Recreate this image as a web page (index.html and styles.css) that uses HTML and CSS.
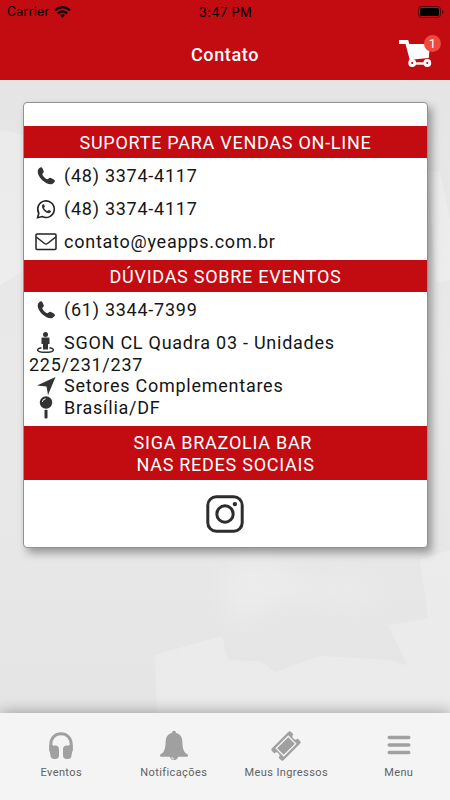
FILE: index.html
```html
<!DOCTYPE html>
<html lang="pt-br">
<head>
  <meta charset="UTF-8">
  <title>Contato</title>
  <link rel="stylesheet" href="styles.css">
</head>
<body>

<!-- icones usados mais de uma vez -->
<svg class="defs">
  <symbol id="phone" viewBox="0 0 22 22">
    <path d="M3 5C3.400 3.500 5 2 6.500 2.200C7.500 2.700 8.400 5.400 8.800 6.600C9.100 7.900 7.200 8.500 7.300 9.500C7.700 11 10.500 13.900 12.300 14.300C13.300 14.500 14 12.600 15.200 12.800C16.600 13.100 19.500 14.800 19.900 15.700C20 17.100 17.700 19.200 15.800 19.300C10.900 19.400 2.700 12.500 2.700 6.500Z"/>
  </symbol>
</svg>

<header class="header">
  <div class="status">
    <div class="carrier">
      <span>Carrier</span>
      <svg width="17" height="12" viewBox="0 0 17 12" fill="none" stroke="#000" stroke-width="2.200">
        <path d="M1 4.300Q8.500-1.900 16 4.300"/>
        <path d="M3.900 7.300Q8.500 3.600 13.100 7.300"/>
        <path d="M8.500 11.700L5.900 9.200Q8.500 7.200 11.100 9.200Z" fill="#000" stroke="none"/>
      </svg>
    </div>
    <div class="time">3:47 PM</div>
    <div class="battery">
      <svg width="26" height="12" viewBox="0 0 26 12">
        <rect x=".5" y=".5" width="22" height="11" rx="2.800" fill="none" stroke="#5d0508"/>
        <rect x="2" y="2" width="19" height="8" rx="1.500"/>
        <path d="M24 4Q25.500 4.500 25.500 6T24 8Z" fill="#5d0508"/>
      </svg>
    </div>
  </div>
  <div class="toolbar">
    <h1>Contato</h1>
    <div class="cart">
      <svg width="33" height="29" viewBox="0 0 33 29">
        <path d="M0 1H9.200L10.300 5H31L29.800 19L11.500 20.700L10.400 19.500L6.500 5H0Z" fill="#fff"/>
        <path d="M13 24.500H29" stroke="#fff" stroke-width="2.400" fill="none"/>
        <path d="M12 19L11 22" stroke="#fff" stroke-width="2" fill="none"/>
        <circle cx="13.200" cy="24" r="2.500" fill="#c30b12" stroke="#fff" stroke-width="2.800"/>
        <circle cx="28.300" cy="24" r="2.500" fill="#c30b12" stroke="#fff" stroke-width="2.800"/>
      </svg>
      <span class="badge">1</span>
    </div>
  </div>
</header>

<main class="content">
  <!-- textura clara do fundo -->
  <svg class="texture" viewBox="0 0 450 633">
    <path d="M0 50L25 55V190L0 205Z"/>
    <path d="M155 575L222 556L228 580L260 581L275 592L320 576L390 580L450 600V633H157Z"/>
    <path d="M388 545L450 535V633H430Z"/>
    <path d="M420 480L450 470V540L429 542Z"/>
    <path d="M428 90L440 92L450 140V200L436 203Z"/>
    <path d="M225 490Q250 470 285 490T370 500Q395 530 330 520T250 545Q215 530 225 490Z" class="soft"/>
    <path d="M160 55L200 68L201 66Z"/>
  </svg>
  <div class="card">
    <h2>SUPORTE PARA VENDAS ON-LINE</h2>
    <div class="section">
      <p class="row"><svg class="icon"><use href="#phone"/></svg>(48) 3374-4117</p>
      <p class="row">
        <svg class="icon" viewBox="0 0 22 22">
          <path d="M3.800 15.300A8.300 8.300 0 1 1 7.100 18.500L2.600 19.700Z" fill="none" stroke="#222" stroke-width="1.600"/>
          <path d="M6.900 7.600C7.200 6.700 8.200 5.900 8.900 6.200C9.300 6.700 9.800 8 9.900 8.500C9.900 9.100 9 9.500 9.100 9.900C9.500 11.100 11 12.500 12.300 12.900C12.900 13.100 13.300 11.800 13.900 11.900C14.600 12.100 15.900 12.700 16 13.100C16.100 14.200 14.900 15.200 13.700 15.200C10.600 15.100 6.700 11.500 6.900 7.600Z"/>
        </svg>(48) 3374-4117
      </p>
      <p class="row">
        <svg class="icon outline" viewBox="0 0 22 22">
          <rect x="1" y="3" width="20" height="15.500" rx="1"/>
          <path d="M1.300 6L9.500 12.500Q11 13.600 12.500 12.500L20.700 6"/>
        </svg>contato@yeapps.com.br
      </p>
    </div>

    <h2>DÚVIDAS SOBRE EVENTOS</h2>
    <div class="section">
      <p class="row"><svg class="icon"><use href="#phone"/></svg>(61) 3344-7399</p>
      <div class="address">
        <p>
          <svg class="icon" viewBox="0 0 22 22">
            <circle cx="10.500" cy="2.500" r="2.500"/>
            <path d="M7.500 5.500H13.500Q14.500 5.500 14.500 6.500V12H13V17.500H8V12H6.500V6.500Q6.500 5.500 7.500 5.500Z"/>
            <path d="M6.500 15.700C.5 16.800 1 20.300 10.500 20.300S20.500 16.800 14.500 15.700" fill="none" stroke="#333" stroke-width="1.500"/>
          </svg>SGON CL Quadra 03 - Unidades 225/231/237
        </p>
        <p>
          <svg class="icon" viewBox="0 0 22 22"><path d="M20.500 2L13 20L11.500 11.500L2 10.500Z"/></svg>Setores Complementares
        </p>
        <p>
          <svg class="icon" viewBox="0 0 22 22">
            <circle cx="11" cy="5.500" r="6.200"/>
            <rect x="9.500" y="12.700" width="3" height="8.800" rx=".8"/>
            <path d="M7.300 5Q7.700 2 10.600 1.800" fill="none" stroke="#fff"/>
          </svg>Brasília/DF
        </p>
      </div>
    </div>

    <h2>SIGA BRAZOLIA BAR&nbsp;<br>NAS REDES SOCIAIS</h2>
    <div class="social">
      <svg width="38" height="38" viewBox="0 0 38 38" fill="none" stroke="#2d2d2d" stroke-width="3">
        <rect x="1.800" y="1.800" width="34.400" height="34.400" rx="8.500"/>
        <circle cx="19" cy="19" r="8.200"/>
        <circle cx="28.900" cy="9.100" r="2.200" fill="#2d2d2d" stroke="none"/>
      </svg>
    </div>
  </div>
</main>

<nav class="tabs">
  <div class="tab">
    <svg width="30" height="32" viewBox="0 0 30 32">
      <path d="M4.800 21V14.500C4.800 8 9 3.700 15 3.700S25.200 8 25.200 14.500V21" fill="none" stroke="#a0a0a0" stroke-width="3"/>
      <rect x="4.500" y="15.500" width="8.500" height="13.500" rx="3.800"/>
      <rect x="17" y="15.500" width="8.500" height="13.500" rx="3.800"/>
      <path d="M3.300 15H7V27Q3.300 24 3.300 19ZM26.700 15H23V27Q26.700 24 26.700 19Z"/>
    </svg>
    <span>Eventos</span>
  </div>
  <div class="tab">
    <svg width="30" height="32" viewBox="0 0 30 32">
      <circle cx="15" cy="2.700" r="2"/>
      <path d="M15 2.800C19.500 2.800 23 5.500 23.300 11C23.600 19 24.500 22 28.500 24.300Q29.700 26.500 28 26.700H2Q.3 26.500 1.500 24.300C5.500 22 6.400 19 6.700 11C7 5.500 10.500 2.800 15 2.800Z"/>
      <path d="M11.300 26A3.700 3.700 0 0 0 18.700 26Z" stroke="#a0a0a0"/>
      <path d="M12.700 27Q13 29 15 29" fill="none" stroke="#f4f4f4"/>
    </svg>
    <span>Notificações</span>
  </div>
  <div class="tab">
    <svg width="30" height="32" viewBox="0 0 30 32">
      <g transform="rotate(-45 15 16)">
        <path d="M3.500 7.700H26.500Q28.500 7.700 28.500 9.700V13A3 3 0 0 0 28.500 19V22.300Q28.500 24.300 26.500 24.300H3.500Q1.500 24.300 1.500 22.300V19A3 3 0 0 0 1.500 13V9.700Q1.500 7.700 3.500 7.700Z"/>
        <rect x="6.500" y="10.700" width="17" height="10.600" fill="none" stroke="#f4f4f4" stroke-width="1.300"/>
      </g>
    </svg>
    <span>Meus Ingressos</span>
  </div>
  <div class="tab">
    <svg width="30" height="32" viewBox="0 0 30 32">
      <path d="M5.300 7.500H24.700M5.300 15H24.700M5.300 22.500H24.700" stroke="#a0a0a0" stroke-width="3.600" stroke-linecap="round"/>
    </svg>
    <span>Menu</span>
  </div>
</nav>

</body>
</html>
```

FILE: styles.css
```css
* {
  box-sizing: border-box;
}
body {
  margin: 0;
  height: 800px;
  display: flex;
  flex-direction: column;
  overflow: hidden;
  font-family: Roboto, "Liberation Sans", sans-serif;
  color: #151515;
}
h1, h2, p {
  margin: 0;
  font-weight: normal;
}
.defs {
  position: absolute;
  width: 0;
  height: 0;
}

/* topo */
.header {
  height: 80px;
  background: #c30b12;
}
.status {
  display: grid;
  grid-template-columns: 1fr 1fr 1fr;
  align-items: center;
  height: 23px;
  padding: 0 6px 0 7px;
  font-family: Inter, sans-serif;
  font-size: 12.5px;
  color: #000;
}
.carrier {
  display: flex;
  align-items: center;
  gap: 5px;
  letter-spacing: .2px;
}
.time {
  text-align: center;
  font-size: 13px;
  letter-spacing: .3px;
}
.battery {
  display: flex;
  justify-content: flex-end;
}
.toolbar {
  display: grid;
  grid-template-columns: 60px 1fr 60px;
  align-items: center;
  height: 57px;
  color: #fff;
}
.toolbar h1 {
  grid-column: 2;
  padding-top: 6px;
  text-align: center;
  font-size: 18px;
  font-weight: 500;
  letter-spacing: .65px;
}
.cart {
  position: relative;
  width: 42px;
  height: 29px;
  margin: 3px 0 0 9px;
}
.badge {
  position: absolute;
  top: -4px;
  right: 0;
  width: 17px;
  height: 17px;
  border-radius: 50%;
  background: #f0483e;
  font-size: 13px;
  line-height: 17px;
  text-align: center;
}

/* conteudo */
.content {
  flex: 1;
  position: relative;
  padding: 22px 22px 0 23px;
  background: linear-gradient(#e5e5e5, #e9e9e9 45%, #e5e5e5);
}
.texture {
  position: absolute;
  top: 0;
  left: 0;
  width: 450px;
  height: 633px;
  fill: #fff;
  opacity: .22;
}
.texture .soft {
  filter: blur(12px);
}
.card {
  position: relative;
  height: 446px;
  padding-top: 23px;
  border: 1px solid #919191;
  border-radius: 4px;
  background: #fff;
  box-shadow: 4px 5px 9px rgba(0,0,0,.35);
}
.card h2 {
  padding: 6px 0 4px;
  background: #c30b12;
  color: #fff;
  text-align: center;
  font-size: 18px;
  line-height: 22px;
  letter-spacing: .74px;
}
.section {
  padding: 1px 5px 2px;
  font-size: 18px;
  letter-spacing: .75px;
}
.row {
  line-height: 33px;
  height: 33px;
}
.icon {
  width: 22px;
  height: 22px;
  margin: 0 7px 0 6px;
  vertical-align: -5px;
  fill: #333;
  overflow: visible;
}
.outline {
  fill: none;
  stroke: #222;
  stroke-width: 1.5;
}
.address {
  padding: 6px 0 5.2px;
}
.address p {
  height: 21.7px;
  line-height: 21.7px;
}
.address p:first-child {
  height: 43.4px;
}
.address .icon {
  margin-top: -6px;
  margin-bottom: -6px;
  vertical-align: 1px;
}
.social {
  display: flex;
  justify-content: center;
  padding: 15px 2px 0 0;
}

/* menu inferior */
.tabs {
  display: flex;
  height: 87px;
  padding: 17px 0 0 5px;
  background: #f4f4f4;
  box-shadow: 0 -1px 14px rgba(0,0,0,.32);
  z-index: 1;
}
.tab {
  flex: none;
  width: 112.5px;
  display: flex;
  flex-direction: column;
  align-items: center;
  gap: 3.5px;
  font-size: 11px;
  line-height: 14px;
  letter-spacing: .4px;
  color: #626262;
}
.tab svg {
  fill: #a0a0a0;
}
```
